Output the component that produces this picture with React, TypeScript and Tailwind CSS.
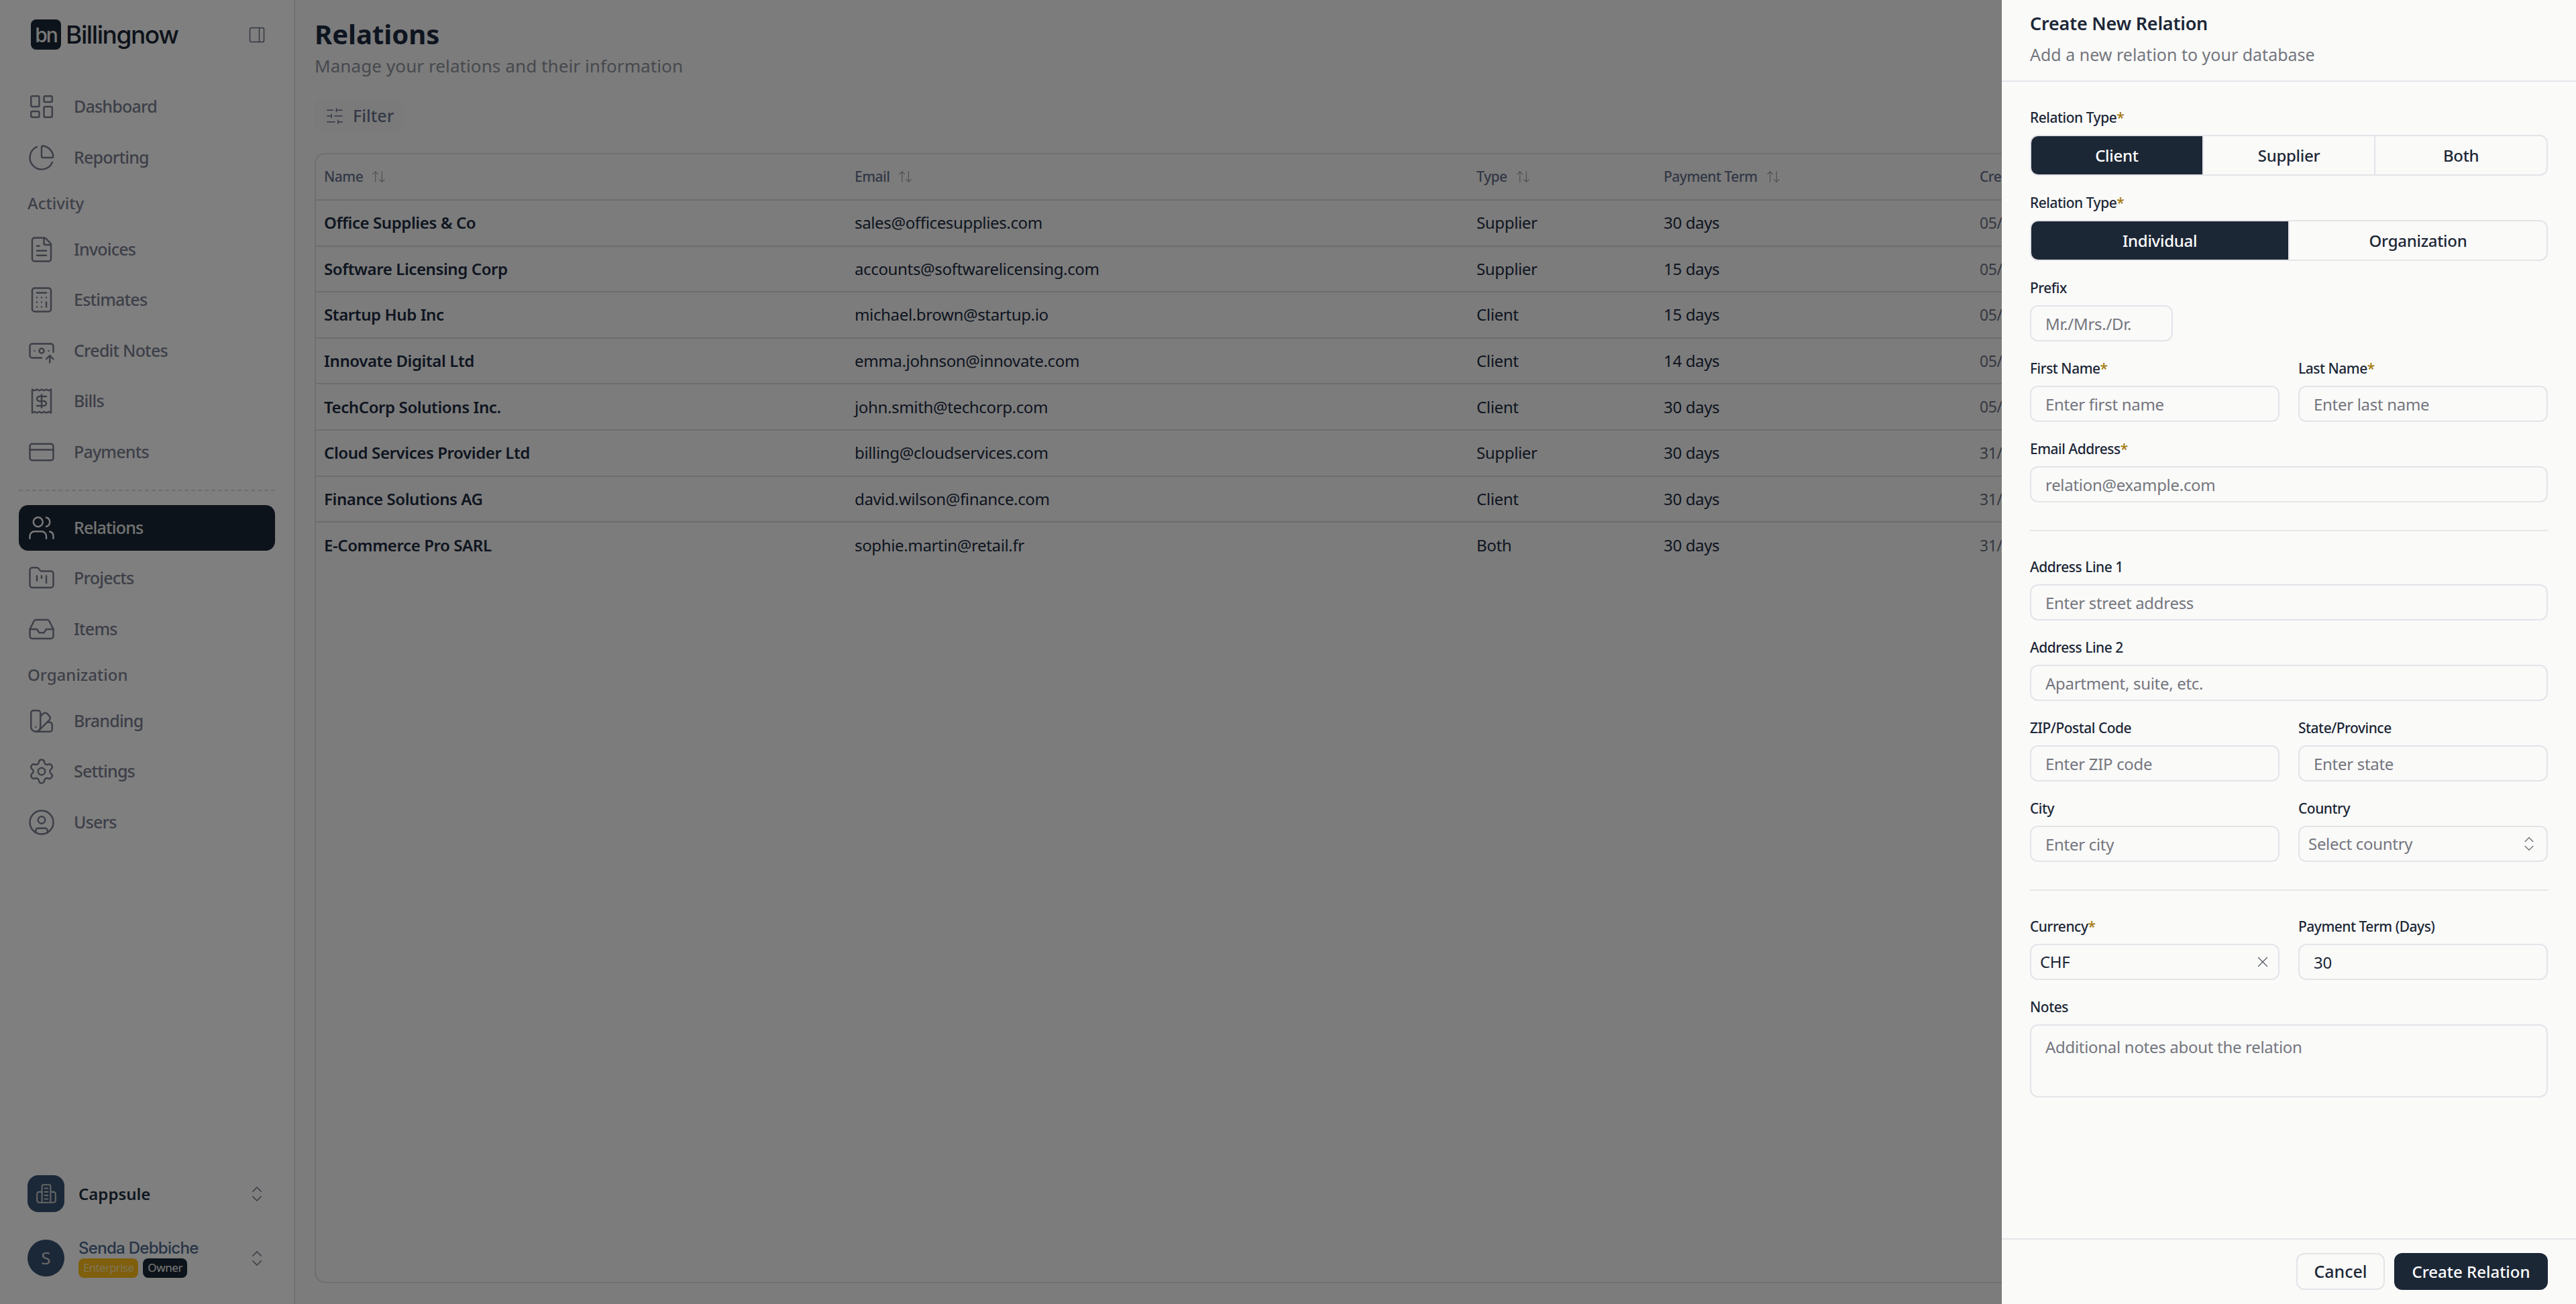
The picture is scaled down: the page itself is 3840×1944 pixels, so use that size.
import React from "react";
import {
  LayoutDashboard, ChartPie, FileText, Calculator, BanknoteArrowUp, Receipt, CreditCard, Users, FolderKanban, Inbox,
  SwatchBook, Settings, CircleUser, PanelRight, ChevronsUpDown, ArrowUpDown, SlidersHorizontal, X,
} from "lucide-react";

const font = "font-['Noto_Sans','Liberation_Sans',sans-serif]";

function NavItem({ icon: Icon, label, active }: { icon: any; label: string; active?: boolean }) {
  return (
    <div className={`flex h-[68px] items-center rounded-[14px] pl-[13px] ${active ? "bg-[#1b2635] text-[#f4f4f4]" : "text-[#7a7e90]"}`}>
      <Icon className="h-[42px] w-[42px] shrink-0" strokeWidth={1.4} />
      <span className={`ml-[27px] text-[25px] font-medium tracking-[-0.8px] ${active ? "text-[#e6e6e6] tracking-[-0.5px]" : ""}`}>{label}</span>
    </div>
  );
}

function GroupLabel({ children }: { children: React.ReactNode }) {
  return <div className="flex h-[54px] items-center pl-[13px] text-[24px] font-medium text-[#7c8090]">{children}</div>;
}

const rows = [
  ["Office Supplies & Co", "sales@officesupplies.com", "Supplier", "30 days", "05/08/2025"],
  ["Software Licensing Corp", "accounts@softwarelicensing.com", "Supplier", "15 days", "05/08/2025"],
  ["Startup Hub Inc", "michael.brown@startup.io", "Client", "15 days", "05/08/2025"],
  ["Innovate Digital Ltd", "emma.johnson@innovate.com", "Client", "14 days", "05/08/2025"],
  ["TechCorp Solutions Inc.", "john.smith@techcorp.com", "Client", "30 days", "05/08/2025"],
  ["Cloud Services Provider Ltd", "billing@cloudservices.com", "Supplier", "30 days", "31/07/2025"],
  ["Finance Solutions AG", "david.wilson@finance.com", "Client", "30 days", "31/07/2025"],
  ["E-Commerce Pro SARL", "sophie.martin@retail.fr", "Both", "30 days", "31/07/2025"],
];

const grid = "grid grid-cols-[791px_927px_279px_471px_1fr]";

function Head({ children }: { children: string }) {
  return (
    <div className="flex items-center whitespace-nowrap pl-[12px] text-[21px] font-medium tracking-[-0.5px] text-[#66708a]">
      {children}
      <ArrowUpDown className="ml-[12px] h-[23px] w-[23px] text-[#9a9da8]" strokeWidth={1.2} />
    </div>
  );
}

function Field({ label, req, children }: { label: string; req?: boolean; children: React.ReactNode }) {
  return (
    <div className="flex flex-col">
      <label className="mb-[9px] flex h-8 items-center text-[21px] font-medium tracking-[-0.5px] text-[#1c2736]">
        {label}
        {req && <span className="text-[#a5790f]">*</span>}
      </label>
      {children}
    </div>
  );
}

const inputCls =
  "h-[54px] w-full rounded-[12px] border-2 border-[#e4e4e9] bg-transparent pl-[21px] text-[24px] tracking-[-0.3px] text-[#1c2736] outline-none placeholder:text-[#74767e]";

function Input({ placeholder, value }: { placeholder?: string; value?: string }) {
  return <input className={inputCls} placeholder={placeholder} defaultValue={value} />;
}

function Segment({ options }: { options: string[] }) {
  return (
    <div className="flex h-[61px] overflow-hidden rounded-[12px] border-2 border-[#e4e4e9]">
      {options.map((o, i) => (
        <div
          key={o}
          className={`flex flex-1 items-center justify-center text-[24px] font-medium tracking-[-0.3px] ${
            i === 0 ? "bg-[#1c2736] text-white" : "border-l-2 border-[#e4e4e9] text-[#1c2736]"
          }`}
        >
          {o}
        </div>
      ))}
    </div>
  );
}

function Divider() {
  return <div className="mb-[13px] mt-[16px] h-[2px] bg-[#e6e6ea]" />;
}

export default function App() {
  return (
    <div className={`relative flex h-screen w-screen overflow-hidden bg-white ${font}`}>
      <aside className="flex w-[440px] shrink-0 flex-col border-r-2 border-[#e4e4e4] bg-white px-[28px]">
        <div className="flex h-[125px] items-start pt-[29px]">
          <div className="ml-[18px] flex h-[45px] w-[45px] items-center justify-center rounded-[8px] bg-[#1b2635] font-['Inter',sans-serif] text-[30px] font-medium leading-none tracking-[-2px] text-[#f0f0f0]">
            bn
          </div>
          <span className="ml-[7px] font-['Inter',sans-serif] text-[37px] font-medium leading-[45px] tracking-[-1.4px] text-[#1b2635]">
            Billingnow
          </span>
          <PanelRight className="ml-auto mr-[13px] mt-[9px] h-[28px] w-[28px] text-[#6a7080]" strokeWidth={1.3} />
        </div>
        <nav className="flex flex-col gap-[7.5px]">
          <NavItem icon={LayoutDashboard} label="Dashboard" />
          <NavItem icon={ChartPie} label="Reporting" />
          <GroupLabel>Activity</GroupLabel>
          <NavItem icon={FileText} label="Invoices" />
          <NavItem icon={Calculator} label="Estimates" />
          <NavItem icon={BanknoteArrowUp} label="Credit Notes" />
          <NavItem icon={Receipt} label="Bills" />
          <NavItem icon={CreditCard} label="Payments" />
          <div className="mt-[15px] mb-[13px] border-t-2 border-dashed border-[#dcdcdc]" />
          <NavItem icon={Users} label="Relations" active />
          <NavItem icon={FolderKanban} label="Projects" />
          <NavItem icon={Inbox} label="Items" />
          <GroupLabel>Organization</GroupLabel>
          <NavItem icon={SwatchBook} label="Branding" />
          <NavItem icon={Settings} label="Settings" />
          <NavItem icon={CircleUser} label="Users" />
        </nav>
        <div className="mt-auto flex flex-col gap-[41px] pb-[41px] pl-[13px]">
          <div className="flex h-[55px] items-center">
            <div className="flex h-[55px] w-[55px] items-center justify-center rounded-[16px] bg-[#365070] text-[#c8c8c8]">
              <svg viewBox="0 0 32 32" className="h-[34px] w-[34px]" fill="none" stroke="currentColor" strokeWidth="2" strokeLinejoin="round">
                <path d="M10 28V5a2 2 0 0 1 2-2h8a2 2 0 0 1 2 2v23" />
                <path d="M10 13H6a3 3 0 0 0-3 3v9a3 3 0 0 0 3 3h20a3 3 0 0 0 3-3v-9a3 3 0 0 0-3-3h-4" />
                <path d="M13 8h6M13 13h6M13 18h6M13 23h6" />
              </svg>
            </div>
            <span className="ml-[21px] text-[24px] font-semibold text-[#1c2c40]">Cappsule</span>
            <ChevronsUpDown className="ml-auto mr-[12px] h-[30px] w-[30px] text-[#7a7e90]" strokeWidth={1.4} />
          </div>
          <div className="flex h-[55px] items-center">
            <div className="flex h-[55px] w-[55px] items-center justify-center rounded-full bg-[#365070] text-[26px] text-[#d0d0d0]">S</div>
            <div className="ml-[21px] flex flex-col">
              <span className="font-['Inter',sans-serif] text-[24px] font-medium leading-[28px] tracking-[-0.7px] text-[#4e6a8c]">Senda Debbiche</span>
              <div className="mt-[1px] flex gap-[7px]">
                <span className="flex h-[29px] items-center rounded-[8px] bg-[#ffbf18] px-[7px] text-[17px] tracking-[-0.7px] text-[#ffe6ad]">Enterprise</span>
                <span className="flex h-[29px] items-center rounded-[8px] bg-[#1b2635] px-[7px] text-[17px] tracking-[-0.4px] text-[#f0f0f0]">Owner</span>
              </div>
            </div>
            <ChevronsUpDown className="ml-auto mr-[12px] h-[30px] w-[30px] text-[#7a7e90]" strokeWidth={1.4} />
          </div>
        </div>
      </aside>

      <main className="flex min-w-0 flex-1 flex-col bg-[#f8f8f8] px-[29px] pb-[31px] pt-[27px]">
        <h1 className="text-[40px] font-bold leading-[48px] text-[#1c2a40]">Relations</h1>
        <p className="mt-[5px] text-[26px] leading-[36px] tracking-[0.1px] text-[#8e929c]">Manage your relations and their information</p>
        <div className="mt-[33px] flex">
          <div className="flex h-[47px] w-[133px] items-center rounded-[10px] bg-[#f5f5f5] pl-[15px] text-[25px] font-medium text-[#66708a]">
            <SlidersHorizontal className="h-[30px] w-[30px]" strokeWidth={1.2} />
            <span className="ml-[12px]">Filter</span>
          </div>
        </div>
        <div className="mt-[32px] flex-1 overflow-hidden rounded-[16px] border-2 border-[#dedede]">
          <div className={`${grid} h-[69px] border-b-2 border-[#dadada]`}>
            <Head>Name</Head>
            <Head>Email</Head>
            <Head>Type</Head>
            <Head>Payment Term</Head>
            <Head>Created</Head>
          </div>
          {rows.map((r, i) => (
            <div key={r[0]} className={`${grid} h-[68.6px] items-center ${i < rows.length - 1 ? "border-b-2 border-[#dadada]" : ""}`}>
              <div className="pl-[12px] text-[24px] font-semibold tracking-[-0.4px] text-[#1c2a40]">{r[0]}</div>
              <div className="pl-[12px] text-[24px] tracking-[-0.35px] text-[#1c2a40]">{r[1]}</div>
              <div className="pl-[12px] text-[24px] tracking-[-0.35px] text-[#1c2a40]">{r[2]}</div>
              <div className="pl-[12px] text-[24px] tracking-[-0.35px] text-[#1c2a40]">{r[3]}</div>
              <div className="pl-[12px] text-[23px] tracking-[-0.35px] text-[#6a7080]">{r[4]}</div>
            </div>
          ))}
        </div>
      </main>

      <div className="absolute inset-0 bg-black/50" />

      <div className="absolute bottom-0 right-0 top-0 flex w-[856px] flex-col bg-[#fafaf9]">
        <header className="h-[122px] shrink-0 border-b-2 border-[#e6e6ea] px-[42px] pt-[16px]">
          <h2 className="text-[27px] font-semibold leading-[38px] tracking-[-0.2px] text-[#1c2736]">Create New Relation</h2>
          <p className="mt-[10px] text-[25px] leading-[34px] text-[#74767e]">Add a new relation to your database</p>
        </header>
        <div className="flex flex-1 flex-col gap-[25px] pl-[42px] pr-[42px] pt-[38px]">
          <Field label="Relation Type" req><Segment options={["Client", "Supplier", "Both"]} /></Field>
          <Field label="Relation Type" req><Segment options={["Individual", "Organization"]} /></Field>
          <Field label="Prefix">
            <div className="w-[213px]"><Input placeholder="Mr./Mrs./Dr." /></div>
          </Field>
          <div className="grid grid-cols-2 gap-[28px]">
            <Field label="First Name" req><Input placeholder="Enter first name" /></Field>
            <Field label="Last Name" req><Input placeholder="Enter last name" /></Field>
          </div>
          <Field label="Email Address" req><Input placeholder="relation@example.com" /></Field>
          <Divider />
          <Field label="Address Line 1"><Input placeholder="Enter street address" /></Field>
          <Field label="Address Line 2"><Input placeholder="Apartment, suite, etc." /></Field>
          <div className="grid grid-cols-2 gap-[28px]">
            <Field label="ZIP/Postal Code"><Input placeholder="Enter ZIP code" /></Field>
            <Field label="State/Province"><Input placeholder="Enter state" /></Field>
          </div>
          <div className="grid grid-cols-2 gap-[28px]">
            <Field label="City"><Input placeholder="Enter city" /></Field>
            <Field label="Country">
              <div className="flex h-[54px] items-center rounded-[12px] border-2 border-[#e4e4e9] pl-[13px] pr-[12px] text-[24px] tracking-[-0.3px] text-[#74767e]">
                Select country
                <ChevronsUpDown className="ml-auto h-[28px] w-[28px]" strokeWidth={1.3} />
              </div>
            </Field>
          </div>
          <Divider />
          <div className="grid grid-cols-2 gap-[28px]">
            <Field label="Currency" req>
              <div className="flex h-[54px] items-center rounded-[12px] border-2 border-[#e4e4e9] pl-[13px] pr-[10px] text-[24px] tracking-[-0.3px] text-[#1c2736]">
                CHF
                <X className="ml-auto h-[26px] w-[26px] text-[#555a66]" strokeWidth={1.2} />
              </div>
            </Field>
            <Field label="Payment Term (Days)"><Input value="30" /></Field>
          </div>
          <Field label="Notes">
            <textarea
              className="h-[109px] w-full resize-none rounded-[12px] border-2 border-[#e4e4e9] bg-transparent px-[21px] pt-[14px] text-[24px] tracking-[-0.3px] outline-none placeholder:text-[#74767e]"
              placeholder="Additional notes about the relation"
            />
          </Field>
        </div>
        <footer className="flex h-[98px] shrink-0 items-start justify-end gap-[14px] border-t-2 border-[#e6e6ea] pr-[42px] pt-[20px]">
          <button className="h-[55px] w-[132px] rounded-[12px] border-2 border-[#e4e4e9] text-[25px] font-medium text-[#1c2736]">Cancel</button>
          <button className="h-[55px] w-[229px] rounded-[12px] bg-[#1c2736] text-[24px] font-medium text-white">Create Relation</button>
        </footer>
      </div>
    </div>
  );
}
